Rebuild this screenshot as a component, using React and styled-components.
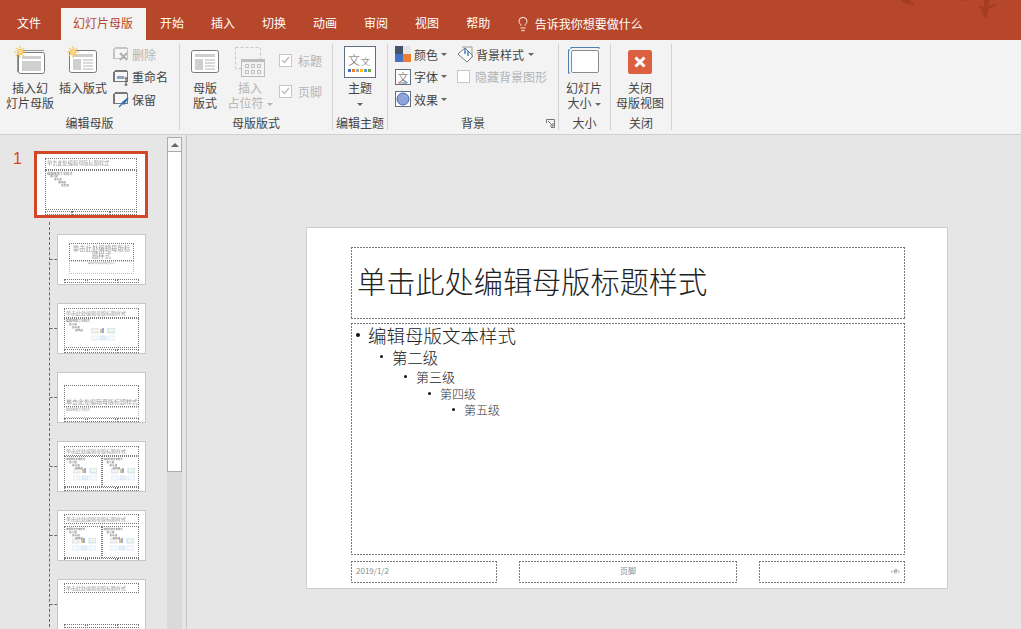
import React from "react";
import styled, { createGlobalStyle, css } from "styled-components";
import { Lightbulb } from "lucide-react";

const FONT = `"Noto Sans CJK SC", "Liberation Sans", sans-serif`;

const Global = createGlobalStyle`
  html, body { margin: 0; padding: 0; overflow: hidden; background: #e6e6e6; }
  * { box-sizing: border-box; }
  body { font-family: ${FONT}; }
`;

const dashes = css`
  background-image:
    linear-gradient(90deg, #777 2px, transparent 2px),
    linear-gradient(90deg, #777 2px, transparent 2px),
    linear-gradient(180deg, #777 2px, transparent 2px),
    linear-gradient(180deg, #777 2px, transparent 2px);
  background-size: 3px 1px, 3px 1px, 1px 3px, 1px 3px;
  background-position: 0 0, 0 100%, 0 0, 100% 0;
  background-repeat: repeat-x, repeat-x, repeat-y, repeat-y;
`;

const Page = styled.div`
  width: 1021px; height: 629px; overflow: hidden; display: flex; flex-direction: column;
  background: #e6e6e6; font-size: 12px; color: #444;
`;
const TitleBar = styled.div`
  position: relative; height: 40px; flex: none; background: #b7472a; display: flex;
  align-items: flex-end; padding-left: 3.5px; color: #fff;
`;
const Birds = styled.svg`position: absolute; right: 0; top: 0;`;
const Tab = styled.div`
  height: 32px; padding: 0 ${p => (p.$active ? 12.5 : 13.5)}px; line-height: 30px; font-size: 12px; white-space: nowrap;
  margin-right: ${p => p.$gap || 0}px;
  background: ${p => (p.$active ? "#f3f3f3" : "transparent")};
  color: ${p => (p.$active ? "#b7472a" : "#fff")};
`;
const Tell = styled.div`
  display: flex; align-items: center; gap: 4px; height: 32px; padding-left: 11px; font-size: 12px; line-height: 30px;
`;
const Ribbon = styled.div`
  height: 95px; flex: none; background: #f3f3f3; border-bottom: 1px solid #d0d0d0; display: flex; padding-top: 4px;
`;
const Group = styled.div`
  width: ${p => p.$w}px; height: 86px; border-right: 1px solid #d2d2d2; display: flex; flex-direction: column;
`;
const GroupBody = styled.div`
  height: 72px; display: flex; padding-left: ${p => p.$pl || 0}px; gap: ${p => p.$gap || 0}px;
`;
const GroupLabel = styled.div`
  position: relative; height: 14px; line-height: 14px; text-align: center; font-size: 12px; color: #444;
`;
const Launcher = styled.svg`position: absolute; right: 3px; top: 3px;`;
const Big = styled.div`
  width: ${p => p.$w || 48}px; flex: none; display: flex; flex-direction: column; align-items: center;
  color: ${p => (p.$off ? "#b4b4b4" : "#444")}; margin-right: ${p => p.$mr || 0}px;
`;
const BigIcon = styled.div`
  height: 36px; flex: none; display: flex; align-items: center; justify-content: center;
`;
const BigText = styled.div`
  line-height: 15px; text-align: center; white-space: nowrap; font-size: 12px;
`;
const Stack = styled.div`
  display: flex; flex-direction: column; padding-top: ${p => p.$pt || 0}px; margin-left: ${p => p.$ml || 0}px; margin-top: -1px;
`;
const Row = styled.div`
  height: ${p => p.$h || 22.5}px; display: flex; align-items: center; gap: ${p => p.$gap ?? 2}px; white-space: nowrap;
  color: ${p => (p.$off ? "#b4b4b4" : "#444")};
`;
const Caret = styled.span`
  display: inline-block; width: 0; height: 0; border-left: 3px solid transparent; border-right: 3px solid transparent;
  border-top: 3px solid ${p => (p.$off ? "#b4b4b4" : "#666")}; margin-left: ${p => p.$ml ?? 3}px; vertical-align: middle;
`;
const Check = styled.span`
  width: 13px; height: 13px; flex: none; background: #fff; border: 1px solid #c6c6c6; display: inline-flex;
  align-items: center; justify-content: center;
`;
const Main = styled.div`flex: 1; min-height: 0; display: flex;`;
const Panel = styled.div`
  width: 187px; flex: none; display: flex; border-right: 1px solid #c6c6c6; padding-right: 4px;
`;
const List = styled.div`flex: 1; min-width: 0; padding-top: 16px; overflow: hidden;`;
const Master = styled.div`display: flex; align-items: flex-start;`;
const Num = styled.div`
  width: 34px; flex: none; padding-left: 13px; color: #d24726; font: 16px/16px "Liberation Sans", sans-serif;
`;
const Tree = styled.div`
  margin-left: 49px; margin-top: 4px; border-left: 1px dashed #666; padding-top: 12px;
  display: flex; flex-direction: column; gap: 18px; height: 420px;
`;
const TreeRow = styled.div`display: flex; align-items: center; flex: none;`;
const Tick = styled.span`width: 7px; flex: none; border-top: 1px dashed #666;`;
const Thumb = styled.div`
  width: ${p => (p.$sel ? 114 : 89)}px; height: ${p => (p.$sel ? 67 : 51)}px; flex: none; background: #fff; overflow: hidden;
  border: ${p => (p.$sel ? "3px solid #d24726" : "1px solid #c6c6c6")};
  display: flex; flex-direction: column;
  padding: ${p => p.$pt || 3}px ${p => p.$px || 6}px 0;
`;
const MBox = styled.div`
  flex: ${p => (p.$grow ? "1 1 0" : "none")}; min-width: 0; height: ${p => (p.$h ? `${p.$h}px` : "auto")};
  border: 1px ${p => p.$line || "dotted"} ${p => p.$c || "#777"}; margin: ${p => p.$mt || 0}px ${p => p.$mx || 0}px 0;
  font-size: ${p => p.$fs || 4.6}px; line-height: 1.1; color: #999; white-space: ${p => (p.$wrap ? "normal" : "nowrap")};
  text-align: ${p => p.$align || "left"}; padding: ${p => p.$pad || "1px"}; overflow: hidden; position: relative;
  display: flex; flex-direction: column; justify-content: ${p => p.$just || "flex-start"};
`;
const MText = styled.div`filter: grayscale(1);`;
const MTwo = styled.div`display: flex; flex: none; height: ${p => p.$h}px; margin-top: ${p => p.$mt || 0}px;`;
const MFoot = styled.div`display: flex; justify-content: space-between; margin-top: ${p => p.$mt || 0}px; flex: none;`;
const MFootBox = styled.span`
  width: ${p => p.$w}px; height: 4px; border: 1px dotted #777; display: block;
`;
const MLine = styled.div`
  font-size: ${p => p.$fs || 2.6}px; line-height: ${p => p.$lh || 3}px; color: #666; padding-left: ${p => p.$in || 0}px; white-space: nowrap;
  filter: grayscale(1);
`;
const MIcons = styled.svg`display: block; margin: ${p => p.$m || "-2px 0 0 22px"};`;
const ScrollBar = styled.div`
  width: 15px; flex: none; margin-top: 2px; background: #dadada; display: flex; flex-direction: column;
`;
const ScrollUp = styled.div`
  height: 15px; background: #f3f3f3; border: 1px solid #ababab; display: flex; align-items: center; justify-content: center;
`;
const Arrow = styled.span`
  width: 0; height: 0; border-left: 4px solid transparent; border-right: 4px solid transparent; border-bottom: 4px solid #666;
`;
const ScrollThumb = styled.div`height: 320px; background: #fff; border: 1px solid #ababab; border-top: 0; margin-top: 0;`;
const Canvas = styled.div`flex: 1; padding: 92px 0 0 119px;`;
const Slide = styled.div`
  width: 642px; height: 362px; background: #fff; border: 1px solid #cfcfcf; padding: 19px 0 0 44px; display: flex; flex-direction: column;
`;
const TitleBox = styled.div`
  ${dashes}
  width: 554px; height: 72px; flex: none; padding: 0 0 4px 6px; display: flex; align-items: center;
  font-size: 29.2px; color: #222; font-weight: 300; white-space: nowrap; line-height: 1;
`;
const BodyBox = styled.div`
  ${dashes}
  width: 554px; height: 232px; flex: none; margin-top: 4px; color: #111;
`;
const Level = styled.div`
  display: flex; align-items: center; height: ${p => p.$h}px; font-size: ${p => p.$fs}px; padding-left: ${p => 5 + p.$n * 24}px;
  white-space: nowrap; color: ${p => p.$c || "#222"}; font-weight: 300;
`;
const Dot = styled.span`
  width: ${p => (p.$n ? 3 : 4)}px; height: ${p => (p.$n ? 3 : 4)}px; border-radius: 50%; background: #111; margin-right: ${p => (p.$n ? 9 : 8)}px; flex: none;
`;
const FootRow = styled.div`
  width: 554px; display: flex; justify-content: space-between; margin-top: 6px; flex: none;
`;
const FootBox = styled.div`
  ${dashes}
  width: ${p => p.$w}px; height: 22px; padding: 0 5px 4px; display: flex; align-items: center;
  justify-content: ${p => p.$just || "flex-start"}; font-size: 8px; color: #8b8b8b;
`;

const Sun = ({ x = 0, y = 0 }) => (
  <g transform={`translate(${x} ${y})`} stroke="#f6c766" strokeWidth="1.2">
    <circle cx="6" cy="6" r="2.8" fill="#f9d88c" />
    <path d="M6 0v2M6 10v2M0 6h2M10 6h2M1.8 1.8l1.4 1.4M8.8 8.8l1.4 1.4M1.8 10.2l1.4-1.4M8.8 3.2l1.4-1.4" />
  </g>
);
const IconMaster = () => (
  <svg width="34" height="32" viewBox="0 0 34 32">
    <path d="M6 4.500h25M4.500 7v19" stroke="#999" fill="none" />
    <rect x="5.500" y="6.500" width="26" height="21" rx="2" fill="#fff" stroke="#7a7a7a" />
    <rect x="9" y="10" width="19" height="3" fill="#cfcfcf" />
    <rect x="9" y="15" width="19" height="10" fill="#cfcfcf" />
    <Sun x="1" y="0" />
  </svg>
);
const IconLayoutNew = () => (
  <svg width="34" height="32" viewBox="0 0 34 32">
    <rect x="3.500" y="4.500" width="27" height="22" rx="2" fill="#fff" stroke="#7a7a7a" />
    <rect x="7" y="8" width="20" height="3" fill="#cfcfcf" />
    <rect x="7" y="13" width="8" height="11" fill="#cfcfcf" />
    <path d="M17 14h10M17 17h10M17 20h10M17 23h10" stroke="#b5b5b5" />
    <Sun x="1" y="0" />
  </svg>
);
const IconMini = ({ kind, off }) => (
  <svg width="18" height="18" viewBox="0 0 18 18">
    <path d="M3 2.500h12M1.500 4v10" stroke={off ? "#c4c4c4" : "#777"} fill="none" />
    <rect x="2.500" y="3.500" width="13" height="10" fill="#f6f6f6" stroke={off ? "#c4c4c4" : "#777"} />
    {kind === "del" && <path d="M8 8l7 7M15 8l-7 7" stroke="#b0b0b0" strokeWidth="2" />}
    {kind === "ren" && <><rect x="5" y="8" width="7" height="3" fill="#8da5c4" /><path d="M14 10v7M12.500 10h3M12.500 17h3" stroke="#444" /></>}
    {kind === "pin" && <path d="M16 8l-4 6-1.500-1.500zM11 13l-4 4" stroke="#2f6fb5" fill="#2f6fb5" strokeWidth="1.3" />}
  </svg>
);
const IconLayout = () => (
  <svg width="30" height="26" viewBox="0 0 30 26">
    <rect x="1.500" y="1.500" width="27" height="22" rx="2" fill="#fff" stroke="#7a7a7a" />
    <rect x="5" y="5" width="20" height="3" fill="#cfcfcf" />
    <rect x="5" y="10" width="8" height="11" fill="#cfcfcf" />
    <path d="M15 11h10M15 14h10M15 17h10M15 20h10" stroke="#b5b5b5" />
  </svg>
);
const IconPlace = () => (
  <svg width="32" height="32" viewBox="0 0 32 32">
    <rect x="1.500" y="1.500" width="25" height="21" fill="none" stroke="#c8c8c8" strokeDasharray="3 2" />
    <rect x="7.500" y="13.500" width="23" height="17" fill="#f3f3f3" stroke="#bdbdbd" />
    <path d="M8 15h22" stroke="#bdbdbd" strokeWidth="2" />
    <path d="M11.500 18.500h3v3h-3zM17.500 18.500h3v3h-3zM23.500 18.500h3v3h-3zM11.500 24.500h3v3h-3zM17.500 24.500h3v3h-3zM23.500 24.500h3v3h-3z" fill="none" stroke="#bdbdbd" />
  </svg>
);
const IconTheme = () => (
  <svg width="32" height="32" viewBox="0 0 32 32">
    <rect x=".5" y=".5" width="31" height="31" fill="#fff" stroke="#5f6f85" />
    <text x="4" y="19" fontSize="12" fill="#666" fontWeight="300" fontFamily={FONT}>文</text>
    <text x="17" y="19" fontSize="9" fill="#666" fontWeight="300" fontFamily={FONT}>文</text>
    {["#4472c4", "#ed7d31", "#a5a5a5", "#ffc000", "#5b9bd5", "#70ad47"].map((c, i) => (
      <rect key={c} x={4 + i * 4} y="23" width="3" height="3" fill={c} />
    ))}
  </svg>
);
const IconColor = () => (
  <svg width="16" height="16" viewBox="0 0 16 16">
    <rect width="8" height="8" fill="#44546a" /><rect x="8" width="8" height="8" fill="#e7e6e6" />
    <rect y="8" width="8" height="8" fill="#4472c4" /><rect x="8" y="8" width="8" height="8" fill="#ed7d31" />
  </svg>
);
const IconFont = () => (
  <svg width="16" height="16" viewBox="0 0 16 16">
    <rect x=".5" y=".5" width="15" height="15" fill="#fff" stroke="#5f6f85" />
    <text x="2.500" y="12.500" fontSize="11" fill="#555" fontWeight="300" fontFamily={FONT}>文</text>
    <path d="M3 14h4" stroke="#ed7d31" /><path d="M7 14h5" stroke="#4472c4" />
  </svg>
);
const IconEffect = () => (
  <svg width="16" height="16" viewBox="0 0 16 16">
    <rect x=".5" y=".5" width="15" height="15" fill="#fff" stroke="#5f6f85" />
    <circle cx="8" cy="8" r="6" fill="#8ea4da" stroke="#4a66b0" />
  </svg>
);
const IconBg = () => (
  <svg width="18" height="18" viewBox="0 0 18 18">
    <path d="M1 9l7-6 8 8-6 6z" fill="#fff" stroke="#777" />
    <path d="M5 2h10v10" fill="none" stroke="#999" />
    <path d="M8 3v6M11 6v5" stroke="#4a7fc0" strokeWidth="1.500" />
  </svg>
);
const IconSize = () => (
  <svg width="32" height="30" viewBox="0 0 32 30">
    <path d="M3 .5h28M3 0v2M31 0v2M.5 3v23M0 3h2M0 26h2" stroke="#4a7fb5" fill="none" />
    <rect x="3.500" y="3.500" width="27" height="22" rx="1.500" fill="#fff" stroke="#8a8a8a" />
  </svg>
);
const IconClose = () => (
  <svg width="24" height="24" viewBox="0 0 24 24">
    <rect width="24" height="24" rx="2.500" fill="#dc5f40" />
    <path d="M7.500 7.500l9 9M16.500 7.500l-9 9" stroke="#fff" strokeWidth="3" />
  </svg>
);
const Tick2 = () => (
  <svg width="9" height="8" viewBox="0 0 9 8"><path d="M1 4l2.500 2.500L8 1" fill="none" stroke="#b8b8b8" strokeWidth="1.200" /></svg>
);
const TinyIcons = ({ m }) => (
  <MIcons $m={m} width="24" height="13" viewBox="0 0 24 13">
    <rect x="0" y="0" width="7" height="5" fill="#f2f2f2" stroke="#ccc" strokeWidth=".5" />
    <rect x="9" y="1" width="2" height="4" fill="#ecc07a" /><rect x="11" y="0" width="2" height="5" fill="#8fb2da" />
    <rect x="17" y="0" width="7" height="5" fill="#eef6f2" stroke="#a4ccbd" strokeWidth=".5" />
    <rect x="0" y="8" width="7" height="4" fill="#f8fbfd" stroke="#cfe0f0" strokeWidth=".5" />
    <rect x="9" y="8" width="6" height="4" fill="#e8f1fa" stroke="#c3daef" strokeWidth=".5" />
    <rect x="17" y="8" width="7" height="4" fill="#f8fbfd" stroke="#cfe0f0" strokeWidth=".5" />
  </MIcons>
);

const T = <MText>单击此处编辑母版标题样式</MText>;
const TextLines = ({ small }) => (
  <>
    <MLine $fs={small ? 2.4 : 3} $lh={3}>编辑母版文本样式</MLine>
    <MLine $in={3} $lh={3}>第二级</MLine>
    <MLine $in={6} $lh={3}>第三级</MLine>
    <MLine $in={9} $lh={3}>第四级</MLine>
  </>
);
const Foot = ({ mt }) => (
  <MFoot $mt={mt}><MFootBox $w={22} /><MFootBox $w={29} /><MFootBox $w={22} /></MFoot>
);

const layouts = [
  <Thumb key="a" $pt={8}>
    <MBox $h={18} $mx={5} $fs={6.4} $wrap $align="center" $just="center" $pad="0">{T}</MBox>
    <MBox $h={13} $mx={5} $c="#bdbdbd" $fs={3} $align="center" $pad="0"><MText>编辑母版副标题样式</MText></MBox>
    <Foot mt={5} />
  </Thumb>,
  <Thumb key="b" $pt={4}>
    <MBox $h={10} $fs={5}>{T}</MBox>
    <MBox $h={30}><TextLines /><TinyIcons m="-4px 0 0 25px" /></MBox>
    <Foot mt={1} />
  </Thumb>,
  <Thumb key="c" $pt={12}>
    <MBox $h={22} $fs={6} $just="flex-end" $pad="0 1px">{T}</MBox>
    <MBox $h={11} $c="#bdbdbd" $fs={3}><MText>编辑母版文本样式</MText></MBox>
    <Foot mt={0} />
  </Thumb>,
  <Thumb key="d" $pt={4}>
    <MBox $h={10} $fs={5}>{T}</MBox>
    <MTwo $h={31}>
      <MBox $grow><TextLines small /><TinyIcons m="-2px 0 0 7px" /></MBox>
      <MBox $grow><TextLines small /><TinyIcons m="-2px 0 0 7px" /></MBox>
    </MTwo>
    <Foot mt={0} />
  </Thumb>,
  <Thumb key="e" $pt={3}>
    <MBox $h={10} $fs={5}>{T}</MBox>
    <MTwo $h={32} $mt={2}>
      <MBox $grow><TextLines small /><TinyIcons m="-2px 0 0 6px" /></MBox>
      <MBox $grow><TextLines small /><TinyIcons m="-2px 0 0 6px" /></MBox>
    </MTwo>
    <Foot mt={0} />
  </Thumb>,
  <Thumb key="f" $pt={3}>
    <MBox $h={10} $fs={5}>{T}</MBox>
    <Foot mt={31} />
  </Thumb>,
];

export default function App() {
  return (
    <Page>
      <Global />
      <TitleBar>
        <Birds width="140" height="24" viewBox="0 0 140 24">
          <path d="M19 0h9l6 4-1 1-6-1-4-1zM81 0h6l-3 1zM103 0h6l-2 5 9-1-1 2-8 3-1 9-3-1-3-8-4-3 7 0z" fill="#a53d23" />
        </Birds>
        <Tab $gap={6}>文件</Tab>
        <Tab $active $gap={1}>幻灯片母版</Tab>
        {["开始", "插入", "切换", "动画", "审阅", "视图", "帮助"].map(t => <Tab key={t}>{t}</Tab>)}
        <Tell><Lightbulb size={16} strokeWidth={1.4} color="#fff" />告诉我你想要做什么</Tell>
      </TitleBar>
      <Ribbon>
        <Group $w={180}>
          <GroupBody $pl={6}>
            <Big $mr={5}><BigIcon><IconMaster /></BigIcon><BigText>插入幻<br />灯片母版</BigText></Big>
            <Big $mr={5}><BigIcon><IconLayoutNew /></BigIcon><BigText>插入版式</BigText></Big>
            <Stack>
              <Row $off><IconMini kind="del" off />删除</Row>
              <Row><IconMini kind="ren" />重命名</Row>
              <Row><IconMini kind="pin" />保留</Row>
            </Stack>
          </GroupBody>
          <GroupLabel>编辑母版</GroupLabel>
        </Group>
        <Group $w={153}>
          <GroupBody $pl={5}>
            <Big $w={40} $mr={1}><BigIcon><IconLayout /></BigIcon><BigText>母版<br />版式</BigText></Big>
            <Big $w={48} $off><BigIcon><IconPlace /></BigIcon><BigText>插入<br />占位符<Caret $off /></BigText></Big>
            <Stack $pt={1.5} $ml={5}>
              <Row $h={31} $off $gap={6}><Check><Tick2 /></Check>标题</Row>
              <Row $h={31} $off $gap={6}><Check><Tick2 /></Check>页脚</Row>
            </Stack>
          </GroupBody>
          <GroupLabel>母版版式</GroupLabel>
        </Group>
        <Group $w={55}>
          <GroupBody $pl={3}>
            <Big $w={48}><BigIcon><IconTheme /></BigIcon><BigText>主题<br /><Caret $ml={0} /></BigText></Big>
          </GroupBody>
          <GroupLabel>编辑主题</GroupLabel>
        </Group>
        <Group $w={171}>
          <GroupBody $pl={7}>
            <Stack>
              <Row $gap={3}><IconColor />颜色<Caret $ml={0} /></Row>
              <Row $gap={3}><IconFont />字体<Caret $ml={0} /></Row>
              <Row $gap={3}><IconEffect />效果<Caret $ml={0} /></Row>
            </Stack>
            <Stack $ml={10}>
              <Row $gap={1}><IconBg />背景样式<Caret /></Row>
              <Row $off $gap={5}><Check />隐藏背景图形</Row>
            </Stack>
          </GroupBody>
          <GroupLabel>
            背景
            <Launcher width="9" height="9" viewBox="0 0 9 9"><path d="M.5 4V.5H8.500V8.500H5M2 2l5 5M7 4v3H4" fill="none" stroke="#777" /></Launcher>
          </GroupLabel>
        </Group>
        <Group $w={52}>
          <GroupBody $pl={1}>
            <Big $w={48}><BigIcon><IconSize /></BigIcon><BigText>幻灯片<br />大小<Caret /></BigText></Big>
          </GroupBody>
          <GroupLabel>大小</GroupLabel>
        </Group>
        <Group $w={61}>
          <GroupBody $pl={0}>
            <Big $w={58}><BigIcon><IconClose /></BigIcon><BigText>关闭<br />母版视图</BigText></Big>
          </GroupBody>
          <GroupLabel>关闭</GroupLabel>
        </Group>
      </Ribbon>
      <Main>
        <Panel>
          <List>
            <Master>
              <Num>1</Num>
              <Thumb $sel $pt={4} $px={8}>
                <MBox $h={12} $fs={5.200}>{T}</MBox>
                <MBox $h={40}><MLine $fs={3.200}>编辑母版文本样式</MLine><MLine $in={3}>第二级</MLine><MLine $in={7}>第三级</MLine><MLine $in={11}>第四级</MLine><MLine $in={14}>第五级</MLine></MBox>
                <MFoot $mt={1}><MFootBox $w={28} /><MFootBox $w={38} /><MFootBox $w={28} /></MFoot>
              </Thumb>
            </Master>
            <Tree>
              {layouts.map((l, i) => <TreeRow key={i}><Tick />{l}</TreeRow>)}
            </Tree>
          </List>
          <ScrollBar>
            <ScrollUp><Arrow /></ScrollUp>
            <ScrollThumb />
          </ScrollBar>
        </Panel>
        <Canvas>
          <Slide>
            <TitleBox>单击此处编辑母版标题样式</TitleBox>
            <BodyBox>
              <Level $n={0} $h={23} $fs={18.500}><Dot />编辑母版文本样式</Level>
              <Level $n={1} $h={21} $fs={15.400}><Dot $n={1} />第二级</Level>
              <Level $n={2} $h={18} $fs={13}><Dot $n={2} />第三级</Level>
              <Level $n={3} $h={17} $fs={12} $c="#333"><Dot $n={3} />第四级</Level>
              <Level $n={4} $h={15} $fs={12} $c="#333"><Dot $n={4} />第五级</Level>
            </BodyBox>
            <FootRow>
              <FootBox $w={146}>2019/1/2</FootBox>
              <FootBox $w={218} $just="center">页脚</FootBox>
              <FootBox $w={146} $just="flex-end">‹#›</FootBox>
            </FootRow>
          </Slide>
        </Canvas>
      </Main>
    </Page>
  );
}
